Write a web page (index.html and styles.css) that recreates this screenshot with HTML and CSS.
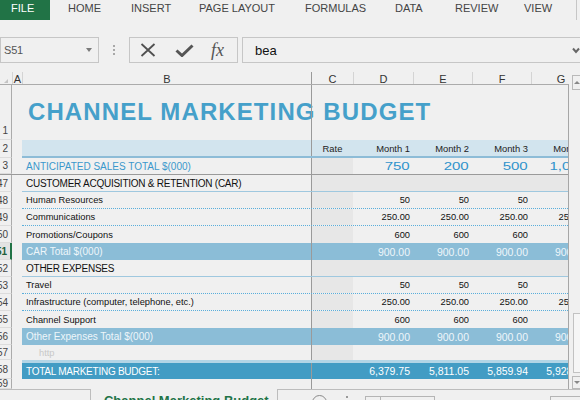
FILE: index.html
```html
<!DOCTYPE html>
<html>
<head>
<meta charset="utf-8">
<title>Channel Marketing Budget</title>
<link rel="stylesheet" href="styles.css">
</head>
<body>
<div class="app">
  <header class="ribbon">
    <nav class="tabs">
      <span class="tab file">FILE</span>
      <span class="tab t-home">HOME</span>
      <span class="tab t-insert">INSERT</span>
      <span class="tab t-page">PAGE LAYOUT</span>
      <span class="tab t-form">FORMULAS</span>
      <span class="tab t-data">DATA</span>
      <span class="tab t-review">REVIEW</span>
      <span class="tab t-view">VIEW</span>
    </nav>
    <span class="ribbon-edge"></span>
  </header>

  <div class="fbar">
    <div class="namebox"><span class="cellref">S51</span><span class="caret"></span></div>
    <div class="grip"><i></i><i></i><i></i></div>
    <div class="fxbox">
      <svg class="ico-x" width="16" height="14" viewBox="0 0 16 14"><path d="M1.5 1 L14.5 13 M14.5 1 L1.5 13" stroke="#505050" stroke-width="1.8" fill="none"/></svg>
      <svg class="ico-ok" width="19" height="13" viewBox="0 0 19 13"><path d="M1.5 6.5 L7 11.5 L17.5 1.5" stroke="#555" stroke-width="3" fill="none"/></svg>
      <span class="fx">fx</span>
    </div>
    <div class="formula">
      <span class="ftext">bea</span>
      <svg class="chev" width="8" height="7" viewBox="0 0 8 7"><path d="M1 1.5 L4 5 L7 1.5" stroke="#666" stroke-width="2" fill="none"/></svg>
    </div>
  </div>

  <div class="main">
    <div class="sheet">
      <div class="colhead">
        <div class="corner"><span class="tri"></span></div>
        <div class="ch">A</div>
        <div class="ch">B</div>
        <div class="ch frz">C</div>
        <div class="ch">D</div>
        <div class="ch">E</div>
        <div class="ch">F</div>
        <div class="ch">G</div>
      </div>

      <div class="body">
        <div class="row r-title">
          <div class="rh rh-bottom">1</div><div class="ca"></div>
          <div class="cells"><div class="b"><h1 class="title">CHANNEL MARKETING BUDGET</h1></div><div class="c"></div><div></div><div></div><div></div><div></div></div>
        </div>

        <div class="row r-hdr">
          <div class="rh">2</div><div class="ca"></div>
          <div class="cells hdr"><div class="b"></div><div class="c mid">Rate</div><div class="num">Month 1</div><div class="num">Month 2</div><div class="num">Month 3</div><div class="num">Month 4</div></div>
        </div>

        <div class="row r-sales">
          <div class="rh">3</div><div class="ca"></div>
          <div class="cells sales"><div class="b cap">ANTICIPATED SALES TOTAL $(000)</div><div class="c g"></div><div class="num"><span class="wide">750</span></div><div class="num"><span class="wide">200</span></div><div class="num"><span class="wide">500</span></div><div class="num"><span class="wide">1,000</span></div></div>
        </div>

        <div class="row">
          <div class="rh">47</div><div class="ca"></div>
          <div class="cells sect line"><div class="b cap">CUSTOMER ACQUISITION &amp; RETENTION (CAR)</div><div class="c"></div><div></div><div></div><div></div><div></div></div>
        </div>

        <div class="row">
          <div class="rh">48</div><div class="ca"></div>
          <div class="cells dots"><div class="b">Human Resources</div><div class="c g"></div><div class="num">50</div><div class="num">50</div><div class="num">50</div><div class="num">50</div></div>
        </div>

        <div class="row">
          <div class="rh">49</div><div class="ca"></div>
          <div class="cells dots"><div class="b">Communications</div><div class="c g"></div><div class="num">250.00</div><div class="num">250.00</div><div class="num">250.00</div><div class="num">250.00</div></div>
        </div>

        <div class="row">
          <div class="rh">50</div><div class="ca"></div>
          <div class="cells"><div class="b">Promotions/Coupons</div><div class="c g"></div><div class="num">600</div><div class="num">600</div><div class="num">600</div><div class="num">600</div></div>
        </div>

        <div class="row">
          <div class="rh sel">51</div><div class="ca"></div>
          <div class="cells band"><div class="b">CAR Total $(000)</div><div class="c"></div><div class="num">900.00</div><div class="num">900.00</div><div class="num">900.00</div><div class="num">900.00</div></div>
        </div>

        <div class="row">
          <div class="rh">52</div><div class="ca"></div>
          <div class="cells sect line"><div class="b cap">OTHER EXPENSES</div><div class="c"></div><div></div><div></div><div></div><div></div></div>
        </div>

        <div class="row">
          <div class="rh">53</div><div class="ca"></div>
          <div class="cells dots"><div class="b">Travel</div><div class="c g"></div><div class="num">50</div><div class="num">50</div><div class="num">50</div><div class="num">50</div></div>
        </div>

        <div class="row">
          <div class="rh">54</div><div class="ca"></div>
          <div class="cells dots"><div class="b">Infrastructure (computer, telephone, etc.)</div><div class="c g"></div><div class="num">250.00</div><div class="num">250.00</div><div class="num">250.00</div><div class="num">250.00</div></div>
        </div>

        <div class="row">
          <div class="rh">55</div><div class="ca"></div>
          <div class="cells"><div class="b">Channel Support</div><div class="c g"></div><div class="num">600</div><div class="num">600</div><div class="num">600</div><div class="num">600</div></div>
        </div>

        <div class="row">
          <div class="rh">56</div><div class="ca"></div>
          <div class="cells band"><div class="b">Other Expenses Total $(000)</div><div class="c"></div><div class="num">900.00</div><div class="num">900.00</div><div class="num">900.00</div><div class="num">900.00</div></div>
        </div>

        <div class="row r-57">
          <div class="rh">57</div><div class="ca"></div>
          <div class="cells"><div class="b hint">http</div><div class="c g"></div><div></div><div></div><div></div><div></div></div>
        </div>

        <div class="row r-total">
          <div class="rh">58</div><div class="ca"></div>
          <div class="cells total"><div class="b cap">TOTAL MARKETING BUDGET:</div><div class="c"></div><div class="num">6,379.75</div><div class="num">5,811.05</div><div class="num">5,859.94</div><div class="num">5,928.13</div></div>
        </div>

        <div class="row r-59">
          <div class="rh">59</div><div class="ca"></div>
          <div class="cells"><div class="b"></div><div class="c"></div><div></div><div></div><div></div><div></div></div>
        </div>
      </div>
    </div>

    <div class="vscroll">
      <div class="sbtn up"><span class="tri-up"></span></div>
      <div class="thumb"></div>
      <div class="sbtn down"><span class="tri-down"></span></div>
    </div>
  </div>

  <footer class="tabbar">
    <div class="tnav"></div>
    <div class="tactive">Channel Marketing Budget</div>
    <div class="trest">
      <span class="plus"></span>
      <span class="tdots"></span>
      <span class="hs"><span class="hs-l"></span></span>
      <span class="hs2"></span>
    </div>
  </footer>
</div>
</body>
</html>
```

FILE: styles.css
```css
* { box-sizing: border-box; margin: 0; padding: 0; }
html, body { width: 580px; height: 400px; overflow: hidden; }
body {
  background: #f0f0f0;
  font-family: "Liberation Sans", Arial, sans-serif;
  color: #1c1c1c;
}
.app { width: 580px; height: 400px; overflow: hidden; }

/* Ribbon */
.ribbon { height: 37px; display: flex; align-items: flex-start; }
.tabs { display: flex; height: 20px; }
.tab { font-size: 11px; line-height: 16px; color: #444; white-space: nowrap; }
.file { background: #217346; color: #fff; width: 50px; height: 20px; padding-left: 11px; }
.t-home { margin-left: 18px; width: 63px; }
.t-insert { width: 68px; }
.t-page { width: 106px; }
.t-form { width: 90px; }
.t-data { width: 60px; }
.t-review { width: 69px; }
.t-view { width: 40px; }
.ribbon-edge { margin-left: auto; margin-right: 3px; width: 1px; height: 20px; background: #c6c6c6; }

/* Formula bar */
.fbar { display: flex; height: 26px; }
.namebox {
  width: 99px; border: 1px solid #c6c6c6;
  display: flex; align-items: center; justify-content: space-between;
  padding: 0 6px 0 3px;
}
.cellref { font-size: 11px; color: #555; letter-spacing: -0.2px; }
.caret { width: 0; height: 0; border-left: 3.5px solid transparent; border-right: 3.5px solid transparent; border-top: 4px solid #7a7a7a; }
.grip { width: 30px; display: flex; flex-direction: column; align-items: center; justify-content: center; gap: 2px; }
.grip i { display: block; width: 2px; height: 2px; background: #a8a8a8; }
.fxbox { width: 109px; border: 1px solid #c6c6c6; display: flex; align-items: center; }
.ico-x { margin-left: 10px; }
.ico-ok { margin-left: 19px; }
.fx { margin-left: 17px; font-family: "Liberation Serif", "Times New Roman", serif; font-style: italic; font-size: 18px; color: #555; line-height: 18px; }
.formula {
  flex: 1; margin-left: 4px; border: 1px solid #c6c6c6; border-right: none;
  display: flex; align-items: center; padding-left: 12px;
}
.ftext { font-size: 13px; color: #111; }
.chev { margin-left: auto; }

/* Main sheet area */
.main { display: flex; height: 317px; margin-top: 9px; }
.sheet { width: 569px; display: flex; flex-direction: column; overflow: hidden; }

.colhead {
  height: 13px; width: 569px; overflow: hidden;
  display: grid; grid-template-columns: 12px 10px 289px 42px 60px 59px 59px 59px;
  border-bottom: 1px solid #ababab;
}
.corner { display: flex; align-items: flex-end; justify-content: flex-end; padding: 0 4px 2px 0; }
.tri { width: 0; height: 0; border-left: 4px solid transparent; border-bottom: 4px solid #c4c4c4; }
.ch { font-size: 11px; line-height: 12px; padding-top: 1px; text-align: center; color: #333; border-left: 1px solid #d4d4d4; }
.ch.frz { border-left-color: #9a9a9a; }

.body { flex: 1; border-right: 1px solid #a6a6a6; overflow: hidden; }
.row { display: grid; grid-template-columns: 12px 10px 1fr; height: 17px; }
.rh {
  border-right: 1px solid #ababab; border-bottom: 1px solid #dcdcdc;
  font-size: 10px; color: #444;
  display: flex; justify-content: flex-end; align-items: center;
  padding-right: 3px; overflow: hidden; white-space: nowrap;
}
.rh-bottom { align-items: flex-end; padding-bottom: 3px; }
.rh.sel { border-right: 2px solid #217346; background: #e3e3e3; color: #1e5e3a; font-weight: bold; }

.cells {
  display: grid; grid-template-columns: 289px 42px 60px 59px 59px 59px;
  overflow: hidden; align-items: stretch;
  font-size: 9.3px; color: #111;
}
.cells > div { display: flex; align-items: center; white-space: nowrap; }
.cells > .b { padding-left: 4px; }
.cells > .c { border-left: 1px solid #9a9a9a; }
.cells > .g { background: #e7e7e7; }
.num { justify-content: flex-end; padding-right: 3px; }
.mid { justify-content: center; }
.cap { font-size: 10px; letter-spacing: -0.25px; }

.r-title { height: 55px; }
.r-title .b { align-items: flex-start; }
.title {
  padding: 15px 0 0 2px;
  font-size: 24px; line-height: 24px; font-weight: bold;
  letter-spacing: 1.1px; color: #45a0ca;
}

.r-hdr { height: 18px; }
.hdr { background: #d2e4ee; border-bottom: 2px solid #8dbcd7; font-size: 9.4px; color: #222; }

.r-sales { border-bottom: 1px solid #9a9a9a; }
.sales { color: #3a98cc; }
.sales .cap { letter-spacing: 0; }
.wide { display: inline-block; font-size: 10px; transform: scaleX(1.5); transform-origin: right center; color: #2f93cc; }

.sect > div:not(:first-child) { background: #e7e7e7; }
.line { border-bottom: 1px solid #9fc8df; }
.dots { border-bottom: 1px dotted #5aaedb; }

.band { background: #8bbdd7; color: #eef6fa; font-size: 10px; }
.band .num { font-size: 10.5px; }

.r-57 { height: 15px; }
.hint { color: #c8c8c8; padding-left: 17px !important; }

.r-total { height: 19px; }
.total { background: #429cc4; border-top: 3px solid #b2d5e6; color: #fff; }
.total .num { font-size: 10.5px; }

.r-59 { height: 10px; }

/* Vertical scrollbar */
.vscroll { width: 11px; display: flex; flex-direction: column; }
.sbtn { margin-left: 3px; border: 1px solid #b9b9b9; border-right: none; display: flex; align-items: center; justify-content: center; }
.up { margin-top: 3px; height: 15px; }
.down { margin-top: 3px; height: 13px; }
.tri-up { width: 0; height: 0; border-left: 3px solid transparent; border-right: 3px solid transparent; border-bottom: 3px solid #888; }
.tri-down { width: 0; height: 0; border-left: 3px solid transparent; border-right: 3px solid transparent; border-top: 3px solid #888; }
.thumb { margin: 223px 0 0 4px; height: 60px; border: 1px solid #c2c2c2; border-right: none; background: #f6f6f6; }

/* Sheet tab bar */
.tabbar { display: flex; height: 11px; }
.tnav { width: 92px; border-top: 1px solid #bdbdbd; border-right: 1px solid #bdbdbd; }
.tactive {
  width: 189px; border-right: 1px solid #bdbdbd;
  padding: 5px 0 0 13px;
  font-size: 13px; line-height: 13px; font-weight: bold; color: #217346;
  white-space: nowrap; overflow: hidden;
}
.trest { flex: 1; border-top: 1px solid #bdbdbd; display: flex; align-items: flex-start; }
.plus { margin: 5px 0 0 34px; width: 15px; height: 15px; border: 1px solid #8a8a8a; border-radius: 50%; flex: none; }
.tdots { margin: 6px 0 0 19px; width: 2px; height: 2px; background: #999; flex: none; }
.hs { margin: 6px 0 0 17px; width: 70px; height: 12px; border: 1px solid #b5b5b5; display: flex; flex: none; }
.hs-l { width: 15px; border-right: 1px solid #b5b5b5; }
.hs2 { margin: 6px 0 0 115px; width: 30px; height: 12px; border: 1px solid #b5b5b5; border-right: none; flex: none; }
```
